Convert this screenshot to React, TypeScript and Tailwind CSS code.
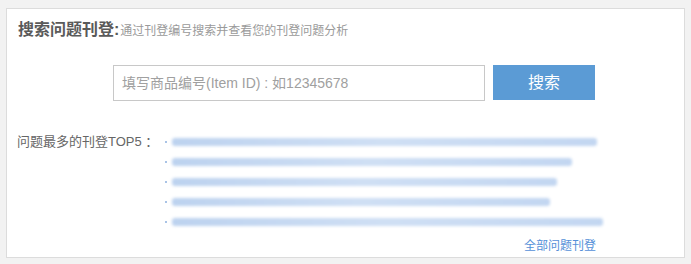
const items = [
  { w: 425 },
  { w: 400 },
  { w: 385 },
  { w: 378 },
  { w: 431 },
];

export default function App() {
  return (
    <div
      className="h-[264px] w-[691px] bg-[#f2f2f2] pl-[6px] pr-[6px] pt-[8px] pb-[6px]"
      style={{ fontFamily: '"Liberation Sans", Arial, "Noto Sans CJK SC", sans-serif' }}
    >
      <div className="relative h-full border border-[#dcdcdc] bg-white">
        {/* Header */}
        <div className="flex items-baseline pl-[11px] pt-[9px]">
          <h2 className="text-[16px] font-bold text-[#5a5a5a]">搜索问题刊登:</h2>
          <span className="ml-[1px] text-[12px] text-[#9a9a9a]">通过刊登编号搜索并查看您的刊登问题分析</span>
        </div>

        {/* Search */}
        <div className="mt-[23px] flex pl-[106px]">
          <input
            className="h-[36px] w-[372px] border border-[#c8c8c8] px-[8px] text-[14px] text-[#333] outline-none placeholder:text-[#a0a0a0]"
            placeholder="填写商品编号(Item ID) : 如12345678"
          />
          <button className="ml-[8px] h-[35px] w-[102px] bg-[#5b9bd5] text-[16px] text-white">搜索</button>
        </div>

        {/* Top 5 */}
        <div className="mt-[31px] flex pl-[10px]">
          <div className="w-[148px] text-[13px] leading-[20px] text-[#666]">问题最多的刊登TOP5 ：</div>
          <ul className="flex flex-col">
            {items.map((it, i) => (
              <li key={i} className="flex h-[20px] items-center">
                <span className="mr-[5px] h-[1.5px] w-[2px] bg-[#a9c3e6]" />
                <div
                  className="h-[8px] rounded-[3px] bg-gradient-to-r from-[#bcd2ef] via-[#cfdff4] to-[#c2d6f1] blur-[1.5px]"
                  style={{ width: it.w }}
                />
              </li>
            ))}
          </ul>
        </div>

        <div className="mt-[1px] pl-[517px]">
          <a className="text-[12px] text-[#5590d8]" href="#">全部问题刊登</a>
        </div>
      </div>
    </div>
  );
}
